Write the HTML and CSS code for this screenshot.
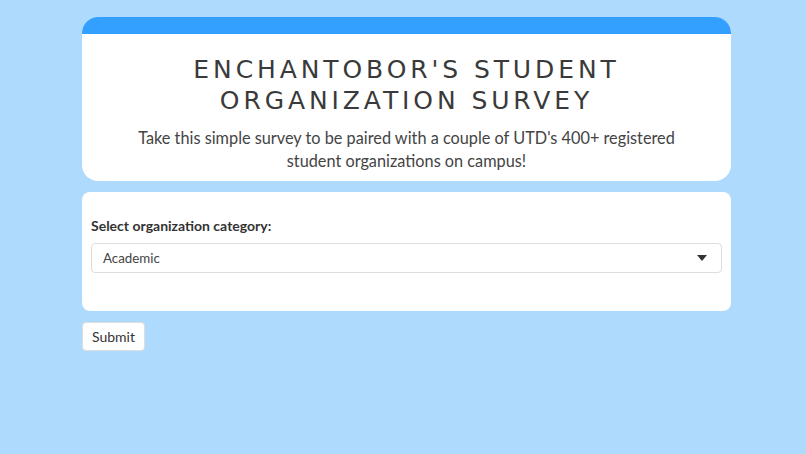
FILE: index.html
```html
<!DOCTYPE html>
<html>
<head>
<meta charset="utf-8">
<link rel="stylesheet" href="styles.css">
</head>
<body>
<main class="page">
  <section class="header-card">
    <div class="header-bar"></div>
    <div class="header-body">
      <h1 class="title">ENCHANTOBOR'S STUDENT<br>ORGANIZATION SURVEY</h1>
      <p class="subtitle">Take this simple survey to be paired with a couple of UTD's 400+ registered<br>student organizations on campus!</p>
    </div>
  </section>
  <section class="form-card">
    <label class="field-label">Select organization category:</label>
    <div class="select">
      <span class="select-value">Academic</span>
      <svg class="caret" width="10" height="6" viewBox="0 0 10 6"><path d="M0 0 H10 L5 6 Z" fill="#333"/></svg>
    </div>
  </section>
  <div class="actions">
    <button class="btn">Submit</button>
  </div>
</main>
</body>
</html>
```

FILE: styles.css
```css
html, body {
  margin: 0;
  padding: 0;
  background: #addafd;
}
body {
  font-family: "Lato", "Open Sans", sans-serif;
  color: #333;
}
.page {
  width: 649px;
  margin: 0 0 0 82px;
  padding-top: 17px;
  display: flex;
  flex-direction: column;
}
.header-card {
  background: #fff;
  border-radius: 16px;
  overflow: hidden;
}
.header-bar {
  height: 17px;
  background: #33a0ff;
}
.header-body {
  padding: 20px 20px 9px;
  text-align: center;
}
.title {
  margin: 0;
  font-family: "DejaVu Sans", sans-serif;
  font-weight: 400;
  font-size: 25px;
  line-height: 31px;
  letter-spacing: 3.9px;
  color: #3a3a3a;
}
.subtitle {
  margin: 10px 0 0;
  font-size: 16.3px;
  line-height: 23px;
  color: #444;
}
.form-card {
  margin-top: 11px;
  background: #fff;
  border-radius: 8px;
  padding: 25px 9px 38px;
  display: flex;
  flex-direction: column;
}
.field-label {
  font-size: 14px;
  font-weight: 700;
  color: #333;
  line-height: 18px;
  margin-bottom: 8px;
}
.select {
  height: 28px;
  border: 1px solid #ddd;
  border-radius: 4px;
  display: flex;
  align-items: center;
  justify-content: space-between;
  padding: 0 14px 0 11px;
}
.select-value {
  font-size: 13.3px;
  color: #444;
}
.actions {
  margin-top: 11px;
  display: flex;
}
.btn {
  font-family: "Lato", "Open Sans", sans-serif;
  font-size: 14px;
  color: #333;
  background: #fff;
  border: 1px solid #ddd;
  border-radius: 4px;
  height: 29px;
  padding: 0 9px;
}
```
